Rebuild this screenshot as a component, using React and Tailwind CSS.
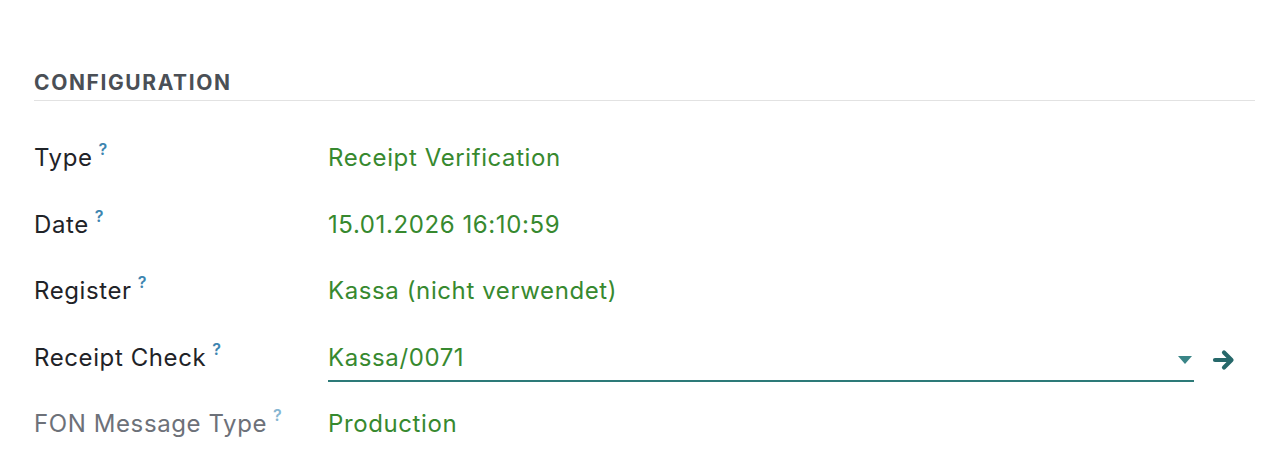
import React from 'react'

const rows = [
  { label: 'Type', value: 'Receipt Verification' },
  { label: 'Date', value: '15.01.2026 16:10:59' },
  { label: 'Register', value: 'Kassa (nicht verwendet)' },
  { label: 'Receipt Check', value: 'Kassa/0071', field: true },
  { label: 'FON Message Type', value: 'Production', muted: true },
]

function Help({ muted }) {
  return (
    <sup className={`ml-[6px] -top-[11px] text-[16px] font-semibold ${muted ? 'text-[#86b6d2]' : 'text-[#3d85b0]'}`}>?</sup>
  )
}

export default function App() {
  return (
    <div className="w-[1288px] h-[464px] overflow-hidden bg-white pl-[34px] pr-[33px] pt-[70px]" style={{ fontFamily: 'Inter, "Noto Sans", sans-serif' }}>
      <div className="border-b border-[#e2e2e2] pb-[5px]">
        <h2 className="text-[21px] font-bold tracking-[1.6px] text-[#4a4f56] leading-[25px]">CONFIGURATION</h2>
      </div>

      <div className="flex flex-col pt-[24px]">
        {rows.map((r) => (
          <div key={r.label} className="flex items-center h-[66.5px]">
            <div className={`w-[294px] shrink-0 text-[24px] tracking-[0.6px] leading-[30px] ${r.muted ? 'text-[#6d7179]' : 'text-[#1f2328]'}`}>
              {r.label}
              <Help muted={r.muted} />
            </div>
            {r.field ? (
              <div className="flex items-center flex-1 self-stretch">
                <div className="relative flex items-center flex-1 self-stretch">
                  <span className="flex-1 text-[24px] tracking-[0.6px] leading-[30px] text-[#37892f]">{r.value}</span>
                  <svg width="14" height="8" viewBox="0 0 14 8" className="mr-[2px] mt-[4px]">
                    <path d="M0 0h14L7 8z" fill="#3a8587" />
                  </svg>
                  <div className="absolute left-0 right-0 top-[55px] h-[2px] bg-[#2d7a78]" />
                </div>
                <svg width="24" height="22" viewBox="0 0 24 22" className="ml-[18px] mr-[19px] mt-[4px]">
                  <path d="M3 11h16M12 3.5l7.5 7.5-7.5 7.5" fill="none" stroke="#26686a" strokeWidth="4.2" strokeLinecap="round" strokeLinejoin="round" />
                </svg>
              </div>
            ) : (
              <div className="text-[24px] tracking-[0.6px] leading-[30px] text-[#37892f]">{r.value}</div>
            )}
          </div>
        ))}
      </div>
    </div>
  )
}
